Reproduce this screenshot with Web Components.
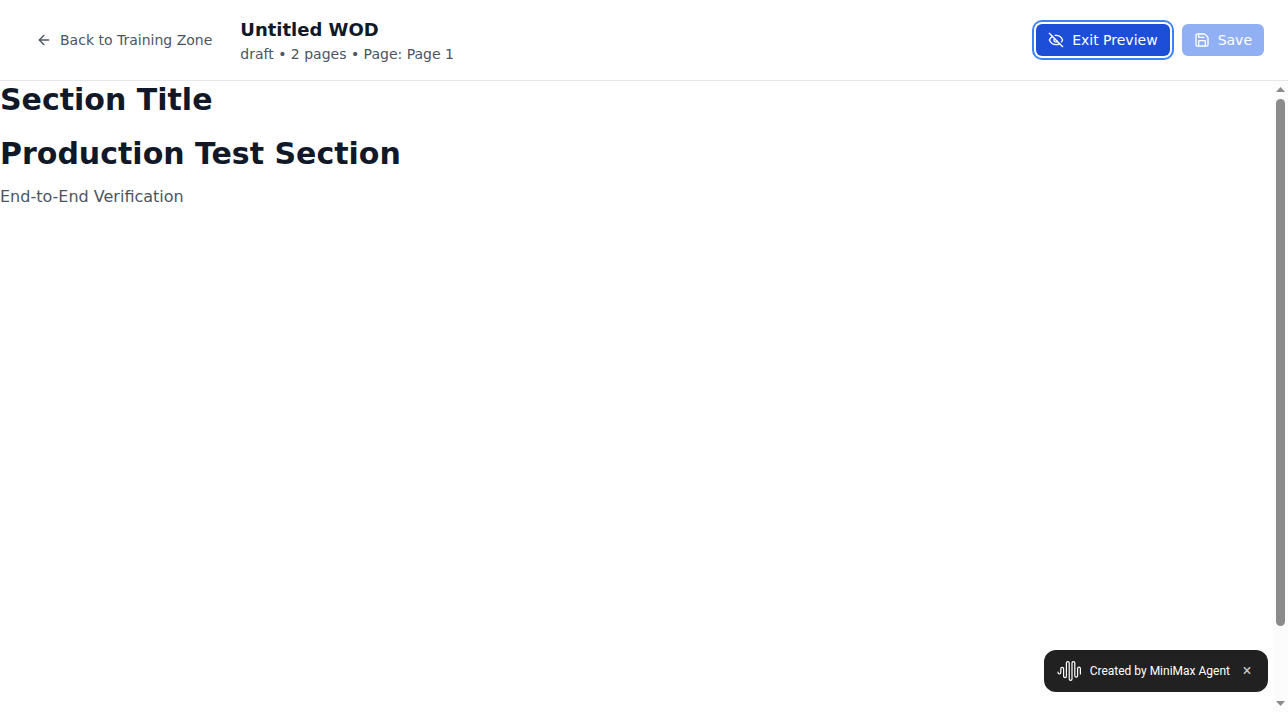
<!DOCTYPE html>
<html lang="en">
<head>
<meta charset="utf-8">
<meta name="viewport" content="width=device-width, initial-scale=1">
<title>Untitled WOD</title>
<style>
html, body { height: 100%; margin: 0; }
body { background: #fff; color: #111827; font-family: "DejaVu Sans", sans-serif; }
</style>
</head>
<body>
<wod-app>
  <wod-header slot="header">
    <wod-button slot="start" variant="ghost" icon="back">Back to Training Zone</wod-button>
    <span slot="title">Untitled WOD</span>
    <span slot="meta">draft • 2 pages • Page: Page 1</span>
    <wod-button slot="actions" variant="primary" icon="eye-off" active>Exit Preview</wod-button>
    <wod-button slot="actions" variant="primary" icon="save" disabled>Save</wod-button>
  </wod-header>
  <wod-section heading="Section Title"></wod-section>
  <wod-section heading="Production Test Section">End-to-End Verification</wod-section>
  <agent-badge slot="badge">Created by MiniMax Agent</agent-badge>
</wod-app>
<script>
const define = (name, html, setup) => customElements.define(name, class extends HTMLElement {
  constructor() {
    super();
    const template = document.createElement('template');
    template.innerHTML = html;
    this.attachShadow({ mode: 'open' }).append(template.content.cloneNode(true));
  }
  connectedCallback() { if (setup) setup(this, this.shadowRoot); }
});

const icons = {
  back: '<path d="m12 19-7-7 7-7"/><path d="M19 12H5"/>',
  'eye-off': '<path d="M9.88 9.88a3 3 0 1 0 4.24 4.24"/><path d="M10.73 5.08A10.43 10.43 0 0 1 12 5c7 0 10 7 10 7a13.16 13.16 0 0 1-1.67 2.68"/><path d="M6.61 6.61A13.526 13.526 0 0 0 2 12s3 7 10 7a9.74 9.74 0 0 0 5.39-1.61"/><path d="m2 2 20 20"/>',
  save: '<path d="M15.2 3a2 2 0 0 1 1.4.6l3.8 3.8a2 2 0 0 1 .6 1.4V19a2 2 0 0 1-2 2H5a2 2 0 0 1-2-2V5a2 2 0 0 1 2-2z"/><path d="M17 21v-7a1 1 0 0 0-1-1H8a1 1 0 0 0-1 1v7"/><path d="M7 3v4a1 1 0 0 0 1 1h7"/>'
};

define('wod-button', `
<style>
:host { display: block; flex: none; }
button { display: flex; align-items: center; gap: 8px; height: 32px; padding: 0 12px; border: 0; border-radius: 6px; font: 14px/20px "DejaVu Sans", sans-serif; white-space: nowrap; cursor: pointer; background: transparent; color: #4b5563; }
svg { width: 16px; height: 16px; fill: none; stroke: currentColor; stroke-width: 2; stroke-linecap: round; stroke-linejoin: round; }
:host([variant="primary"]) button { background: #2563eb; color: #fff; }
:host([active]) button { background: #1d4ed8; box-shadow: 0 0 0 2px #fff, 0 0 0 4px #3b82f6; }
button:disabled { opacity: .5; cursor: default; }
</style>
<button type="button"><svg viewBox="0 0 24 24" aria-hidden="true"></svg><slot></slot></button>`,
(host, root) => {
  root.querySelector('svg').innerHTML = icons[host.getAttribute('icon')];
  root.querySelector('button').disabled = host.hasAttribute('disabled');
});

define('wod-header', `
<style>
:host { display: block; }
header { display: flex; align-items: center; justify-content: space-between; padding: 16px 24px; border-bottom: 1px solid #e5e7eb; background: #fff; }
.start { display: flex; align-items: center; gap: 16px; }
.actions { display: flex; align-items: center; gap: 12px; }
h1 { margin: 0; font-size: 18px; line-height: 28px; font-weight: 700; }
p { margin: 0; font-size: 14px; line-height: 20px; color: #4b5563; }
</style>
<header>
  <div class="start"><slot name="start"></slot><div><h1><slot name="title"></slot></h1><p><slot name="meta"></slot></p></div></div>
  <div class="actions"><slot name="actions"></slot></div>
</header>`);

define('wod-section', `
<style>
:host { display: block; }
h2 { margin: 0; font-size: 30px; line-height: 38px; font-weight: 700; }
p { margin: 12px 0 0; font-size: 16px; line-height: 24px; color: #4b5563; }
</style>
<h2></h2>`,
(host, root) => {
  root.querySelector('h2').textContent = host.getAttribute('heading');
  if (host.textContent.trim()) {
    const p = document.createElement('p');
    p.append(document.createElement('slot'));
    root.append(p);
  }
});

define('scroll-rail', `
<style>
:host { display: flex; flex-direction: column; align-items: center; width: 15px; padding: 6px 0; box-sizing: border-box; background: #fcfcfc; }
svg { display: block; width: 9px; height: 5px; fill: #8b8b8b; flex: none; }
.track { display: flex; flex-direction: column; flex: 1; width: 9px; margin: 7px 0; }
.thumb { flex: 31; border-radius: 5px; background: #8b8b8b; }
.rest { flex: 4; }
</style>
<svg viewBox="0 0 9 5"><path d="M0 5 4.500 0 9 5z"/></svg>
<div class="track"><div class="thumb"></div><div class="rest"></div></div>
<svg viewBox="0 0 9 5"><path d="M0 0h9L4.500 5z"/></svg>`);

define('agent-badge', `
<style>
:host { display: block; }
div { display: flex; align-items: center; height: 42px; padding: 0 12px; border-radius: 12px; background: #212121; color: #fff; font: 400 12px/18px Roboto, sans-serif; white-space: nowrap; }
svg { width: 26px; height: 22px; margin-right: 8px; fill: none; stroke: #fff; stroke-width: 1.2; stroke-linecap: round; stroke-linejoin: round; }
button { display: flex; align-items: center; justify-content: center; width: 18px; height: 18px; margin-left: 8px; padding: 0; border: 0; background: transparent; color: #c8c8c8; font: 400 16px/18px Roboto, sans-serif; cursor: pointer; }
</style>
<div>
  <svg viewBox="0 0 26 22" aria-hidden="true"><path d="M2 12v.6a1.400 1.400 0 0 0 2.800 0V8.700a1.400 1.400 0 0 1 2.800 0v7.600a1.400 1.400 0 0 0 2.800 0V3a1.400 1.400 0 0 1 2.800 0v16a1.400 1.400 0 0 0 2.800 0V3a1.400 1.400 0 0 1 2.800 0v12.800a1.400 1.400 0 0 0 2.800 0V8.500a1.400 1.400 0 0 1 2.800 0V14"/></svg>
  <slot></slot>
  <button type="button" aria-label="Close">×</button>
</div>`);

define('wod-app', `
<style>
:host { display: flex; flex-direction: column; height: 100vh; }
.body { display: flex; flex: 1; min-height: 0; }
main { display: flex; flex-direction: column; gap: 16px; flex: 1; min-width: 0; overflow: hidden; }
.badge { position: fixed; right: 20px; bottom: 20px; }
</style>
<slot name="header"></slot>
<div class="body"><main><slot></slot></main><scroll-rail></scroll-rail></div>
<div class="badge"><slot name="badge"></slot></div>`);
</script>
</body>
</html>
